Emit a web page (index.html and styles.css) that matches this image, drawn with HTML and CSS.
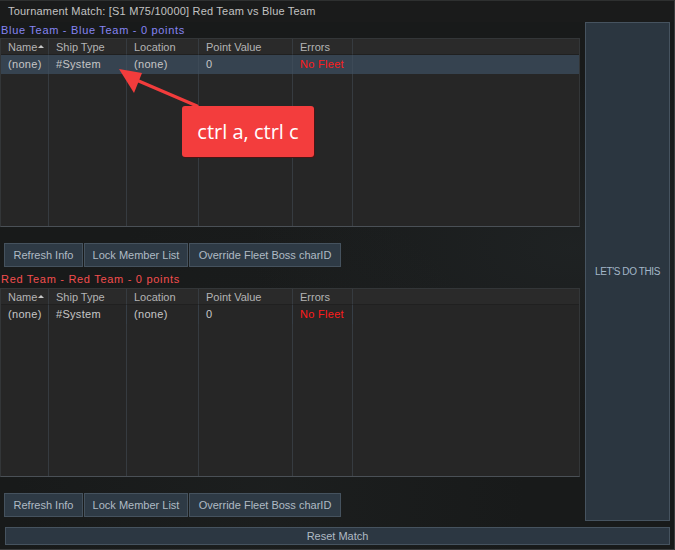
FILE: index.html
```html
<!DOCTYPE html>
<html>
<head>
<meta charset="utf-8">
<link rel="stylesheet" href="styles.css">
</head>
<body>
<div class="window">
  <div class="titlebar">Tournament Match: [S1 M75/10000] Red Team vs Blue Team</div>
  <div class="main">
    <div class="left">
      <div class="team-label blue">Blue Team - Blue Team - 0 points</div>
      <div class="grid">
        <div class="hd">Name<span class="sort"></span></div>
        <div class="hd">Ship Type</div>
        <div class="hd">Location</div>
        <div class="hd">Point Value</div>
        <div class="hd">Errors</div>
        <div class="hd last"></div>
        <div class="cell sel">(none)</div>
        <div class="cell sel">#System</div>
        <div class="cell sel">(none)</div>
        <div class="cell sel">0</div>
        <div class="cell sel err">No Fleet</div>
        <div class="cell sel last"></div>
        <div class="fill"></div><div class="fill"></div><div class="fill"></div><div class="fill"></div><div class="fill"></div><div class="fill last"></div>
      </div>
      <div class="btn-row">
        <div class="btn w1">Refresh Info</div>
        <div class="btn w2">Lock Member List</div>
        <div class="btn w3">Override Fleet Boss charID</div>
      </div>
      <div class="team-label red">Red Team - Red Team - 0 points</div>
      <div class="grid">
        <div class="hd">Name<span class="sort"></span></div>
        <div class="hd">Ship Type</div>
        <div class="hd">Location</div>
        <div class="hd">Point Value</div>
        <div class="hd">Errors</div>
        <div class="hd last"></div>
        <div class="cell">(none)</div>
        <div class="cell">#System</div>
        <div class="cell">(none)</div>
        <div class="cell">0</div>
        <div class="cell err">No Fleet</div>
        <div class="cell last"></div>
        <div class="fill"></div><div class="fill"></div><div class="fill"></div><div class="fill"></div><div class="fill"></div><div class="fill last"></div>
      </div>
      <div class="btn-row">
        <div class="btn w1">Refresh Info</div>
        <div class="btn w2">Lock Member List</div>
        <div class="btn w3">Override Fleet Boss charID</div>
      </div>
    </div>
    <div class="go-panel">LET'S DO THIS</div>
  </div>
  <div class="reset">Reset Match</div>

  <svg class="arrow" width="675" height="550" viewBox="0 0 675 550">
    <line x1="197" y1="106" x2="134" y2="79" stroke="#f23c3c" stroke-width="3.2" stroke-linecap="round"/>
    <polygon points="119,69 142,73 134,93" fill="#f23c3c"/>
  </svg>
  <div class="callout">ctrl a, ctrl c</div>
</div>
</body>
</html>
```

FILE: styles.css
```css
* { box-sizing: border-box; }
html, body { margin: 0; padding: 0; }
body {
  width: 675px;
  height: 550px;
  overflow: hidden;
  background: #151616;
  font-family: "Liberation Sans", Arial, sans-serif;
  font-size: 11px;
  letter-spacing: 0.3px;
}
.window {
  position: relative;
  width: 675px;
  height: 550px;
  background:
    radial-gradient(ellipse at 85% 45%, rgba(60,70,75,0.18), transparent 40%),
    radial-gradient(ellipse at 40% 90%, rgba(50,55,55,0.15), transparent 45%),
    #181a1a;
  border-right: 1px solid #3a3c3d;
  border-bottom: 1px solid #3a3c3d;
  border-top: 1px solid #2e3030;
}
.titlebar {
  height: 21px;
  line-height: 21px;
  padding-left: 8px;
  color: #c2c2c2;
  background: #1a1b1b;
  letter-spacing: 0.2px;
}
.main {
  display: flex;
  height: 499px;
}
.left {
  width: 585px;
  display: flex;
  flex-direction: column;
}
.team-label {
  height: 16px;
  line-height: 16px;
  padding-left: 1px;
  letter-spacing: 0.7px;
}
.team-label.blue { color: #8585f2; }
.team-label.red { color: #f24e4e; height: 21px; padding-top: 4px; }
.grid {
  width: 580px;
  height: 189px;
  display: grid;
  grid-template-columns: 48px 78px 72px 94px 60px 1fr;
  grid-template-rows: 16px 19px 1fr;
  background: #262626;
  border: 1px solid #333638;
  border-bottom-color: #4a5056;
}
.hd {
  background: #2a2a2a;
  border-right: 1px solid #363b40;
  border-bottom: 1px solid #202020;
  color: #b4b4b4;
  padding-left: 7px;
  line-height: 16px;
  letter-spacing: 0;
  white-space: nowrap;
}
.sort {
  display: inline-block;
  width: 0; height: 0;
  margin-left: 1px;
  vertical-align: 3px;
  border-left: 3px solid transparent;
  border-right: 3px solid transparent;
  border-bottom: 3px solid #c8c8c8;
}
.cell {
  border-right: 1px solid #363e46;
  color: #c6c6c6;
  padding-left: 7px;
  line-height: 19px;
  white-space: nowrap;
}
.cell.sel { background: #364350; border-right-color: #3d4a57; }
.cell.err { color: #ff1c1c; }
.fill { border-right: 1px solid #363b40; }
.last { border-right: none; }
.btn-row {
  display: flex;
  gap: 1px;
  margin-top: 16px;
  padding-left: 4px;
  height: 24px;
}
.btn {
  height: 24px;
  line-height: 22px;
  text-align: center;
  background: #2e3a45;
  border: 1px solid #45525e;
  color: #b0bac4;
  letter-spacing: 0;
  white-space: nowrap;
}
.w1 { width: 79px; }
.w2 { width: 104px; }
.w3 { width: 152px; }
.go-panel {
  width: 85px;
  display: flex;
  align-items: center;
  justify-content: center;
  background: #2b3640;
  border: 1px solid #46535f;
  color: #a3b6c8;
  font-size: 10px;
  letter-spacing: -0.4px;
}
.reset {
  margin: 6px 4px 0 5px;
  height: 18px;
  line-height: 16px;
  text-align: center;
  background: #2c3742;
  border: 1px solid #46535f;
  color: #b0bac4;
  letter-spacing: 0;
}
.arrow {
  position: absolute;
  left: 0;
  top: -1px;
  pointer-events: none;
}
.callout {
  position: absolute;
  left: 182px;
  top: 105px;
  width: 132px;
  height: 51px;
  background: #f33d3d;
  border-radius: 3px;
  box-shadow: 1px 1px 0 #4a1414;
  color: #ffffff;
  font-family: "Open Sans", "Noto Sans", sans-serif;
  font-size: 20px;
  letter-spacing: 0;
  display: flex;
  align-items: center;
  justify-content: center;
}
```
